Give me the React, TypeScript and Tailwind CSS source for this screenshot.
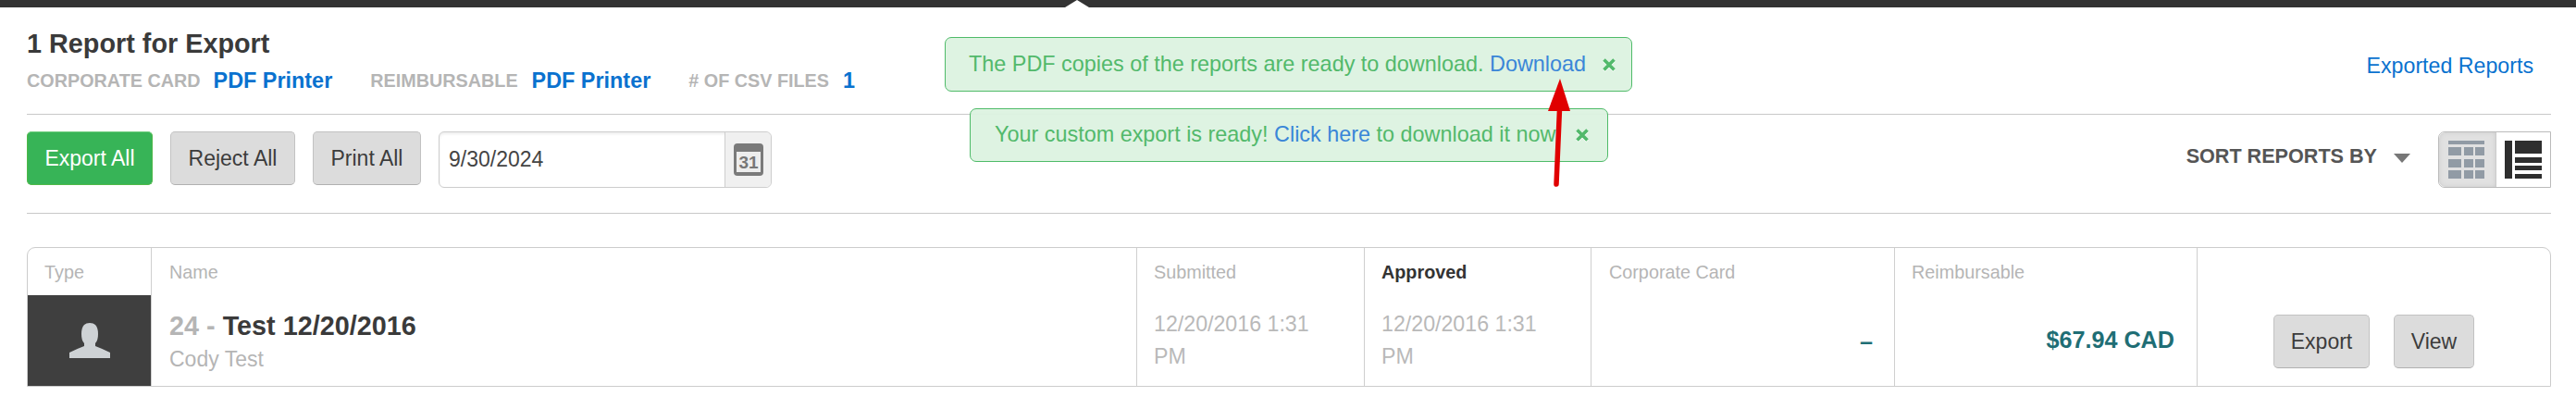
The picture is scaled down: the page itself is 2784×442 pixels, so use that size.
import React from "react";

const grayBtn =
  "h-[58px] rounded-[5px] border border-[#c2c2c2] border-b-[#b0b0b0] bg-[#dcdcdc] text-[23px] text-[#3c3c3c]";

const Calendar = () => (
  <svg width="32" height="35" viewBox="0 0 32 35">
    <rect width="32" height="35" rx="4" fill="#7a7a7a" />
    <rect x="3" y="9" width="26" height="22" fill="#ededed" />
    <text x="16" y="27" textAnchor="middle" fontSize="19" fontWeight="700" fill="#777" fontFamily="Liberation Sans">
      31
    </text>
  </svg>
);

const GridIcon = () => (
  <svg width="39" height="41" viewBox="0 0 39 41" fill="#919ba5">
    <rect width="39" height="4" />
    {[7, 20, 32].map((y) => (
      <g key={y}>
        <rect x="0" y={y} width="14" height="9" />
        <rect x="17" y={y} width="10" height="9" />
        <rect x="29" y={y} width="10" height="9" />
      </g>
    ))}
  </svg>
);

const ListIcon = () => (
  <svg width="40" height="41" viewBox="0 0 40 41" fill="#2e2e2e">
    <rect width="8" height="41" />
    <rect x="11" width="29" height="14" />
    <rect x="11" y="18" width="29" height="6" />
    <rect x="11" y="27" width="29" height="5" />
    <rect x="11" y="36" width="29" height="5" />
  </svg>
);

const Person = () => (
  <svg width="44" height="38" viewBox="0 0 44 38" fill="#ced2d5">
    <path d="M16 2 Q18 0 22 0 Q26 0 28 2 Q31 5 31 12 Q31 19 28 22 L28 25 Q36 28 44 32 L44 38 L0 38 L0 32 Q8 28 16 25 L16 22 Q13 19 13 12 Q13 5 16 2 Z" />
  </svg>
);

const Notice = ({ className, children }: { className: string; children: React.ReactNode }) => (
  <div
    className={`absolute flex items-center rounded-[7px] border border-[#4fbb69] bg-[#dcf2e0]/95 text-[23.4px] text-[#52b96b] ${className}`}
  >
    {children}
  </div>
);

const Close = () => (
  <svg width="14" height="14" viewBox="0 0 14 14" className="[filter:drop-shadow(0_1px_0_#fff)]">
    <path d="M1.5 1.5 L12.5 12.5 M12.5 1.5 L1.5 12.5" stroke="#52b96b" strokeWidth="3.6" />
  </svg>
);

const HeadCell = ({ children, active }: { children: string; active?: boolean }) => (
  <div className={`h-[52px] pt-[15px] text-[19.8px] leading-[22px] ${active ? "font-bold text-[#333]" : "text-[#b5b5b5]"}`}>
    {children}
  </div>
);

const DateCell = () => <div className="mt-[13px] text-[23.2px] leading-[35px] text-[#b9b9b9]">12/20/2016 1:31 PM</div>;

export default function App() {
  return (
    <div className="relative h-[442px] w-[2784px] overflow-hidden bg-white font-['Liberation_Sans',Arial,sans-serif]">
      {/* top bar with notch */}
      <div className="relative h-[8px] bg-[#333333]">
        <div className="absolute top-0 left-[1151px] h-0 w-0 border-x-[13px] border-b-[8px] border-x-transparent border-b-white" />
      </div>

      <div className="mr-[27px] ml-[29px]">
        {/* heading */}
        <div className="flex h-[116px] items-start justify-between border-b border-[#c8c8c8]">
          <div>
            <h1 className="mt-[22px] text-[28.8px] leading-[34px] font-bold text-[#3a3a3a]">1 Report for Export</h1>
            <div className="mt-[6px] flex items-center font-bold">
              <span className="text-[19.8px] text-[#b5b5b5]">CORPORATE CARD</span>
              <span className="ml-[14px] text-[23.4px] text-[#0a72cf]">PDF Printer</span>
              <span className="ml-[41px] text-[19.8px] text-[#b5b5b5]">REIMBURSABLE</span>
              <span className="ml-[15px] text-[23.4px] text-[#0a72cf]">PDF Printer</span>
              <span className="ml-[41px] text-[19.8px] text-[#b5b5b5]"># OF CSV FILES</span>
              <span className="ml-[15px] text-[23.4px] text-[#0a72cf]">1</span>
            </div>
          </div>
          <a className="mt-[50px] mr-[19px] text-[23.2px] leading-[26px] text-[#0a72cf]">Exported Reports</a>
        </div>

        {/* toolbar */}
        <div className="flex h-[107px] items-start justify-between border-b border-[#c8c8c8] pt-[18px]">
          <div className="flex gap-[19px]">
            <button className="h-[58px] w-[136px] rounded-[5px] border border-[#4fb848] border-t-[#6fce7f] bg-[#37b457] text-[23px] text-white">
              Export All
            </button>
            <button className={`${grayBtn} w-[135px]`}>Reject All</button>
            <button className={`${grayBtn} w-[117px]`}>Print All</button>
            <div className="flex h-[61px] w-[360px] rounded-[6px] border border-[#cdcdcd] shadow-[inset_0_2px_3px_#eeeeee]">
              <div className="flex flex-1 items-center pl-[10px] text-[23px] text-[#444]">9/30/2024</div>
              <div className="flex w-[50px] items-center justify-center rounded-r-[6px] border-l border-[#cdcdcd] bg-[#f0f0f0]">
                <Calendar />
              </div>
            </div>
          </div>
          <div className="flex items-center">
            <span className="pb-[6px] text-[21.6px] font-bold text-[#555]">SORT REPORTS BY</span>
            <div className="mb-[4px] ml-[18px] h-0 w-0 border-x-[9px] border-t-[10px] border-x-transparent border-t-[#777]" />
            <div className="ml-[30px] flex h-[61px] w-[122px] rounded-l-[7px] border border-[#bbb]">
              <div className="flex w-[61px] items-center justify-center rounded-l-[7px] bg-[#e1e1e1] pr-[2px] shadow-[inset_0_0_5px_#cccccc]">
                <GridIcon />
              </div>
              <div className="flex flex-1 items-center justify-center border-l border-[#ccc] bg-white">
                <ListIcon />
              </div>
            </div>
          </div>
        </div>

        {/* report table */}
        <div className="mt-[36px] flex h-[151px] rounded-t-[9px] border border-[#cccccc]">
          <div className="flex w-[134px] flex-col border-r border-[#cfcfcf]">
            <div className="h-[51px] pt-[15px] pl-[18px] text-[19.8px] leading-[22px] text-[#b5b5b5]">Type</div>
            <div className="flex flex-1 items-center justify-center bg-[#3f3f3f]">
              <Person />
            </div>
          </div>
          <div className="w-[1064px] pl-[19px]">
            <HeadCell>Name</HeadCell>
            <div className="mt-[15px] text-[28.8px] leading-[34px] font-bold text-[#3a3a3a]">
              <span className="text-[#b5b5b5]">24 - </span>Test 12/20/2016
            </div>
            <div className="mt-[5px] text-[23px] leading-[28px] text-[#b5b5b5]">Cody Test</div>
          </div>
          <div className="w-[246px] border-l border-[#cfcfcf] pr-[30px] pl-[18px]">
            <HeadCell>Submitted</HeadCell>
            <DateCell />
          </div>
          <div className="w-[245px] border-l border-[#cfcfcf] pr-[30px] pl-[18px]">
            <HeadCell active>Approved</HeadCell>
            <DateCell />
          </div>
          <div className="w-[328px] border-l border-[#cfcfcf] pr-[23px] pl-[19px]">
            <HeadCell>Corporate Card</HeadCell>
            <div className="mt-[32px] text-right text-[25.2px] leading-[35px] font-bold text-[#1f6e75]">–</div>
          </div>
          <div className="w-[327px] border-l border-[#cfcfcf] pr-[24px] pl-[18px]">
            <HeadCell>Reimbursable</HeadCell>
            <div className="mt-[30px] text-right text-[25.2px] leading-[35px] font-bold text-[#1f6e75]">$67.94 CAD</div>
          </div>
          <div className="flex flex-1 items-start gap-[26px] border-l border-[#cfcfcf] pt-[72px] pl-[82px]">
            <button className={`${grayBtn} w-[104px]`}>Export</button>
            <button className={`${grayBtn} w-[87px]`}>View</button>
          </div>
        </div>
      </div>

      {/* floating notices */}
      <Notice className="top-[40px] left-[1021px] h-[59px] w-[743px] pl-[25px]">
        <span>
          The PDF copies of the reports are ready to download. <a className="text-[#3a86d8]">Download</a>
        </span>
        <span className="ml-[18px] flex">
          <Close />
        </span>
      </Notice>
      <Notice className="top-[117px] left-[1048px] h-[58px] w-[690px] pl-[26px]">
        <span>
          Your custom export is ready! <a className="text-[#3a86d8]">Click here</a> to download it now!
        </span>
        <span className="ml-[15px] flex">
          <Close />
        </span>
      </Notice>

      {/* red annotation arrow */}
      <svg className="absolute top-[85px] left-[1670px]" width="30" height="120" viewBox="0 0 30 120">
        <path d="M16 0 L27 35 L3 35 Z" fill="#e00000" />
        <path d="M15.5 33 L12 114" stroke="#e00000" strokeWidth="5.5" strokeLinecap="round" />
      </svg>
    </div>
  );
}
